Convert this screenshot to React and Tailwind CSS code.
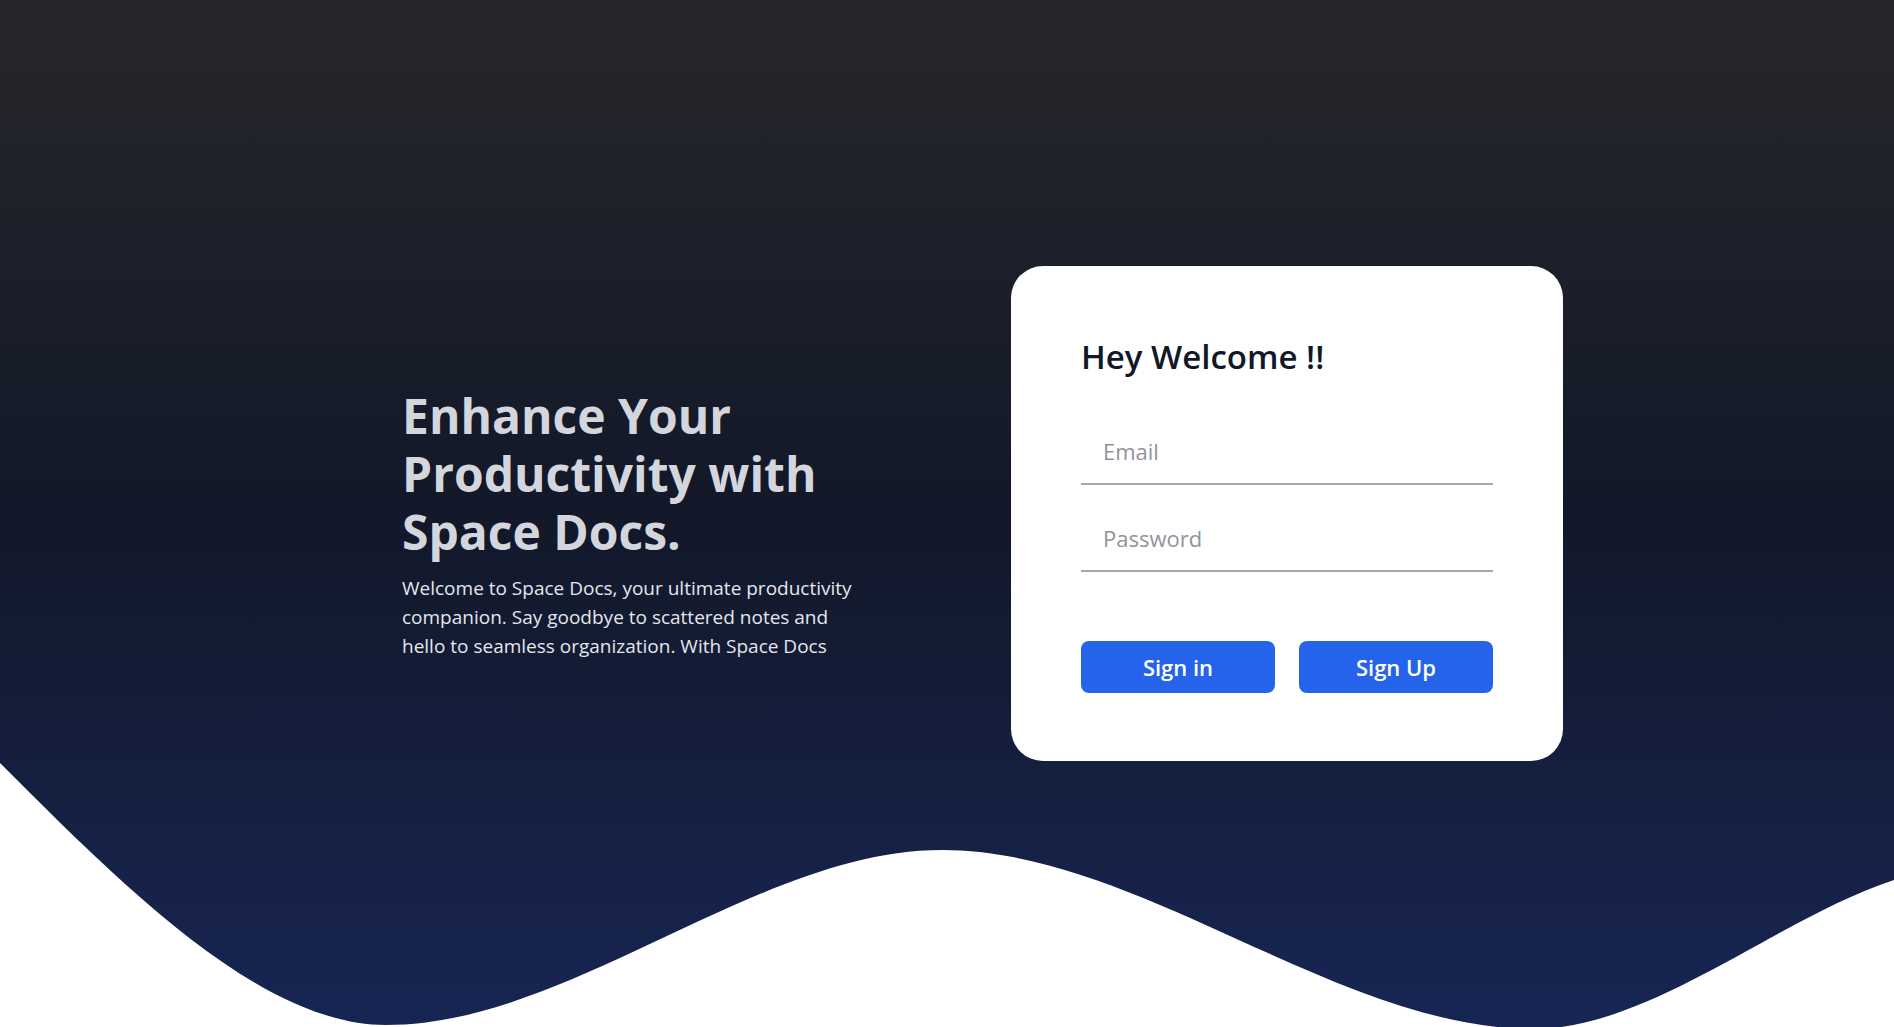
import React from "react";

export default function App() {
  return (
    <div className="relative h-screen w-full overflow-hidden bg-linear-to-b from-[#27272a] via-[#121829] to-[#172554] font-['Open_Sans',sans-serif]">
      <svg
        className="absolute bottom-0 left-0 h-[280px] w-full"
        viewBox="0 0 1894 280"
        preserveAspectRatio="none"
      >
        <path
          fill="#ffffff"
          d="M0,16 C120,136 260,278 386,278 C571,278 757,103 942,103 C1139,103 1337,282 1534,282 C1650,282 1780,170 1894,133 L1894,280 L0,280 Z"
        />
      </svg>

      <div className="relative z-10 flex h-full items-center pl-[402px]">
        <div className="w-[609px] pt-[21px]">
          <h1 className="w-[470px] text-[48px] font-bold leading-[58px] text-[#d4d6de]">
            Enhance Your Productivity with Space Docs.
          </h1>
          <p className="mt-[13px] w-[465px] text-[19px] leading-[29px] text-[#e4e6ec]">
            Welcome to Space Docs, your ultimate productivity companion. Say goodbye to scattered notes and hello to seamless organization. With Space Docs
          </p>
        </div>

        <div className="w-[552px] rounded-[32px] bg-white px-[70px] pt-[70px] pb-[68px]">
          <h2 className="text-[33px] font-semibold leading-[42px] text-[#111827]">
            Hey Welcome !!
          </h2>
          <div className="mt-[45px] flex flex-col gap-[25px]">
            <input
              type="email"
              placeholder="Email"
              className="h-[62px] w-full border-b-2 border-[#a3a7b0] bg-transparent pb-[5px] pl-[22px] text-[22px] text-gray-900 outline-none placeholder:text-[#8f949c]"
            />
            <input
              type="password"
              placeholder="Password"
              className="h-[62px] w-full border-b-2 border-[#a3a7b0] bg-transparent pb-[5px] pl-[22px] text-[22px] text-gray-900 outline-none placeholder:text-[#8f949c]"
            />
          </div>
          <div className="mt-[69px] flex gap-6">
            <button className="h-[52px] flex-1 rounded-[8px] bg-[#2563eb] text-[22px] font-semibold text-white">
              Sign in
            </button>
            <button className="h-[52px] flex-1 rounded-[8px] bg-[#2563eb] text-[22px] font-semibold text-white">
              Sign Up
            </button>
          </div>
        </div>
      </div>
    </div>
  );
}
